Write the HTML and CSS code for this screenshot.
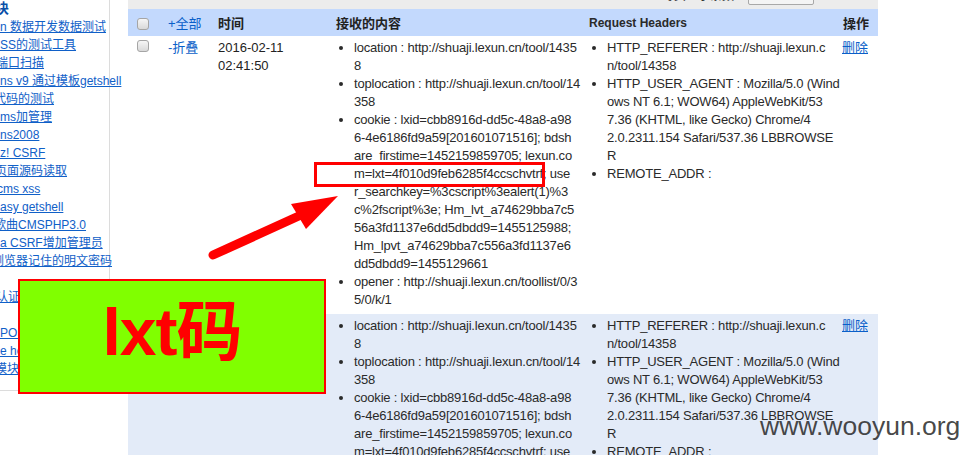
FILE: index.html
```html
<!DOCTYPE html>
<html lang="zh-CN">
<head>
<meta charset="utf-8">
<title>接收的内容</title>
<link rel="stylesheet" href="styles.css">
</head>
<body>
<div class="page">
  <aside class="side">
    <div class="side-head">块</div>
    <ul class="side-list">
      <li><a href="#">n 数据开发数据测试</a></li>
      <li><a href="#">SS的测试工具</a></li>
      <li><a href="#" class="clip4">端口扫描</a></li>
      <li><a href="#">ns v9 通过模板getshell</a></li>
      <li><a href="#" class="clip6">代码的测试</a></li>
      <li><a href="#">ms加管理</a></li>
      <li><a href="#">ns2008</a></li>
      <li><a href="#">z! CSRF</a></li>
      <li><a href="#" class="clip5">页面源码读取</a></li>
      <li><a href="#" class="clip3">cms xss</a></li>
      <li><a href="#">asy getshell</a></li>
      <li><a href="#" class="clip6">歌曲CMSPHP3.0</a></li>
      <li><a href="#">a CSRF增加管理员</a></li>
      <li><a href="#" class="clip8">浏览器记住的明文密码</a></li>
      <li class="blank"></li>
      <li><a href="#" class="clip4">认证绕过</a></li>
      <li class="blank"></li>
      <li><a href="#">POST注入</a></li>
      <li><a href="#">e header</a></li>
      <li><a href="#" class="clip5">模块</a></li>
    </ul>
  </aside>

  <main class="main">
    <div class="topbar">
      <span class="tb-a">ılı</span>
      <span class="tb-b">ー ー</span>
      <span class="tb-c">ı</span>
      <span class="tb-spacer"></span>
      <span class="tb-d">每页显示条数</span>
      <span class="tb-btn"></span>
    </div>
    <table class="grid">
      <colgroup>
        <col class="w-chk"><col class="w-fold"><col class="w-time"><col class="w-body"><col class="w-head"><col class="w-op">
      </colgroup>
      <thead>
        <tr>
          <th class="chk-cell"><span class="chk"></span></th>
          <th><a href="#" class="plain">+全部</a></th>
          <th class="cjk-b">时间</th>
          <th class="cjk-b">接收的内容</th>
          <th class="en-b">Request Headers</th>
          <th class="cjk-b">操作</th>
        </tr>
      </thead>
      <tbody>
        <tr class="row">
          <td class="chk-cell"><span class="chk"></span></td>
          <td><a href="#" class="plain">-折叠</a></td>
          <td class="time">2016-02-11 02:41:50</td>
          <td class="list-cell">
            <ul class="kv">
              <li>location : http://shuaji.lexun.cn/tool/1435<br>8</li>
              <li>toplocation : http://shuaji.lexun.cn/tool/14<br>358</li>
              <li>cookie : lxid=cbb8916d-dd5c-48a8-a98<br>6-4e6186fd9a59[201601071516]; bdsh<br>are_firstime=1452159859705; lexun.co<br>m=lxt=4f010d9feb6285f4ccschvtrf; use<br>r_searchkey=%3cscript%3ealert(1)%3<br>c%2fscript%3e; Hm_lvt_a74629bba7c5<br>56a3fd1137e6dd5dbdd9=1455125988;<br>Hm_lpvt_a74629bba7c556a3fd1137e6<br>dd5dbdd9=1455129661</li>
              <li>opener : http://shuaji.lexun.cn/toollist/0/3<br>5/0/k/1</li>
            </ul>
          </td>
          <td class="list-cell">
            <ul class="kv">
              <li>HTTP_REFERER : http://shuaji.lexun.c<br>n/tool/14358</li>
              <li>HTTP_USER_AGENT : Mozilla/5.0 (Wind<br>ows NT 6.1; WOW64) AppleWebKit/53<br>7.36 (KHTML, like Gecko) Chrome/4<br>2.0.2311.154 Safari/537.36 LBBROWSE<br>R</li>
              <li>REMOTE_ADDR :</li>
            </ul>
          </td>
          <td class="op"><a href="#">删除</a></td>
        </tr>
        <tr class="row alt">
          <td class="chk-cell"><span class="chk"></span></td>
          <td><a href="#" class="plain">-折叠</a></td>
          <td class="time">2016-02-11 02:40:12</td>
          <td class="list-cell">
            <ul class="kv">
              <li>location : http://shuaji.lexun.cn/tool/1435<br>8</li>
              <li>toplocation : http://shuaji.lexun.cn/tool/14<br>358</li>
              <li>cookie : lxid=cbb8916d-dd5c-48a8-a98<br>6-4e6186fd9a59[201601071516]; bdsh<br>are_firstime=1452159859705; lexun.co<br>m=lxt=4f010d9feb6285f4ccschvtrf; use<br>r_searchkey=%3cscript%3ealert(1)%3<br>c%2fscript%3e; Hm_lvt_a74629bba7c5<br>56a3fd1137e6dd5dbdd9=1455125988;<br>Hm_lpvt_a74629bba7c556a3fd1137e6<br>dd5dbdd9=1455129661</li>
              <li>opener : http://shuaji.lexun.cn/toollist/0/3<br>5/0/k/1</li>
            </ul>
          </td>
          <td class="list-cell">
            <ul class="kv">
              <li>HTTP_REFERER : http://shuaji.lexun.c<br>n/tool/14358</li>
              <li>HTTP_USER_AGENT : Mozilla/5.0 (Wind<br>ows NT 6.1; WOW64) AppleWebKit/53<br>7.36 (KHTML, like Gecko) Chrome/4<br>2.0.2311.154 Safari/537.36 LBBROWSE<br>R</li>
              <li>REMOTE_ADDR :</li>
            </ul>
          </td>
          <td class="op"><a href="#">删除</a></td>
        </tr>
      </tbody>
    </table>
  </main>
</div>

<div class="mark-box"></div>
<svg class="arrow" width="967" height="455" viewBox="0 0 967 455" aria-hidden="true">
  <line x1="213" y1="255" x2="301" y2="215" stroke="#ff0000" stroke-width="9" stroke-linecap="round"/>
  <polygon points="338,196 291,204 306,229" fill="#ff0000"/>
</svg>
<div class="label-box"><span class="label-text">lxt码</span></div>
<div class="watermark">www.wooyun.org</div>
</body>
</html>
```
FILE: styles.css
```css
html, body {
  margin: 0;
  padding: 0;
  background: #ffffff;
}
body {
  font-family: "Liberation Sans", Arial, "Noto Sans CJK SC", sans-serif;
  font-size: 13px;
  color: #222;
  position: relative;
  width: 967px;
  height: 455px;
  overflow: hidden;
}
a { color: #0a5fc9; }

.page {
  display: flex;
  align-items: flex-start;
}

/* sidebar */
.side {
  width: 109px;
  height: 390px;
  border-right: 1px solid #dcdcdc;
  border-bottom: 1px solid #dcdcdc;
  flex: none;
  font-size: 12px;
  position: relative;
  z-index: 1;
}
.side-head {
  font-weight: bold;
  font-size: 14px;
  line-height: 16px;
  color: #0a4fa8;
  white-space: nowrap;
  margin-left: -5px;
}
.side-list {
  list-style: none;
  margin: 2px 0 0;
  padding: 0;
}
.side-list li {
  line-height: 18px;
  height: 18px;
  white-space: nowrap;
}
.side-list a { color: #1060c8; }
.clip3 { margin-left: -3px; }
.clip4 { margin-left: -4px; }
.clip5 { margin-left: -5px; }
.clip6 { margin-left: -6px; }
.clip8 { margin-left: -8px; }

/* main */
.main {
  margin-left: 18px;
  width: 750px;
  flex: none;
}
.topbar {
  height: 9px;
  background: #ececec;
  display: flex;
  align-items: flex-end;
  overflow: hidden;
  font-size: 12px;
  line-height: 14px;
}
.topbar > span { margin-bottom: 6px; }
.tb-a { color: #333; }
.tb-b { margin-left: 28px; color: #333; }
.tb-c { margin-left: 16px; color: #c33; }
.tb-spacer { flex: 1; }
.tb-d { color: #333; margin-right: 14px; }
.topbar > .tb-btn {
  width: 66px;
  height: 16px;
  border: 1px solid #a8a8a8;
  border-radius: 2px;
  background: #f4f4f4;
  margin-right: 64px;
  margin-bottom: 4px;
  box-sizing: border-box;
}

.grid {
  width: 750px;
  border-collapse: collapse;
  table-layout: fixed;
}
.w-chk { width: 32px; }
.w-fold { width: 50px; }
.w-time { width: 118px; }
.w-body { width: 253px; }
.w-head { width: 254px; }
.w-op { width: 43px; }

.grid thead tr {
  background: #c3d9fd;
  height: 27px;
}
.grid th {
  text-align: left;
  padding: 0 0 0 8px;
  font-weight: normal;
  vertical-align: middle;
  color: #222;
}
.grid th.cjk-b { font-weight: bold; font-size: 13px; }
.grid th.en-b { font-weight: bold; font-size: 12px; color: #2a2a2a; }
.grid th.chk-cell, .grid td.chk-cell { padding-left: 9px; }

.chk {
  display: inline-block;
  width: 12px;
  height: 12px;
  border: 1px solid #a5a5a5;
  border-radius: 3px;
  background: linear-gradient(#f6f6f6, #d9d9d9);
  box-sizing: border-box;
  vertical-align: middle;
}
.grid td.chk-cell { padding-top: 4px; }
.grid td.chk-cell .chk { display: block; }

a.plain { text-decoration: none; color: #0a5fc9; }

.grid td {
  vertical-align: top;
  padding: 3px 6px 5px 8px;
  line-height: 18px;
}
.row { background: #fff; }
.row.alt { background: #e3ebf8; }
.grid td.time { color: #222; }
.grid td.list-cell { padding-left: 0; padding-right: 0; }
.kv {
  margin: 0;
  padding-left: 26px;
  color: #2a2a2a;
  letter-spacing: -0.2px;
}
.kv li {
  line-height: 18px;
  white-space: nowrap;
}
.grid td.op { padding-left: 7px; }
.op a { color: #0a5fc9; }

/* overlays */
.mark-box {
  position: absolute;
  left: 314px;
  top: 162px;
  width: 231px;
  height: 25px;
  border: 3px solid #ff0000;
  box-sizing: border-box;
  z-index: 2;
}
.arrow {
  position: absolute;
  left: 0;
  top: 0;
  z-index: 2;
}
.label-box {
  position: absolute;
  left: 18px;
  top: 279px;
  width: 308px;
  height: 115px;
  box-sizing: border-box;
  border: 2px solid #ff0000;
  background: #80ff00;
  display: flex;
  align-items: center;
  justify-content: center;
  padding-bottom: 10px;
  z-index: 2;
}
.label-text {
  color: #ff0000;
  font-family: "Liberation Sans", Arial, "Noto Sans CJK SC", sans-serif;
  font-weight: bold;
  font-size: 66px;
  line-height: 1;
  letter-spacing: -1px;
}
.watermark {
  position: absolute;
  left: 760px;
  top: 410px;
  font-family: "Liberation Sans", Arial, sans-serif;
  font-size: 26.5px;
  line-height: 32px;
  color: rgba(40, 40, 40, 0.85);
  white-space: nowrap;
  z-index: 2;
}
```
